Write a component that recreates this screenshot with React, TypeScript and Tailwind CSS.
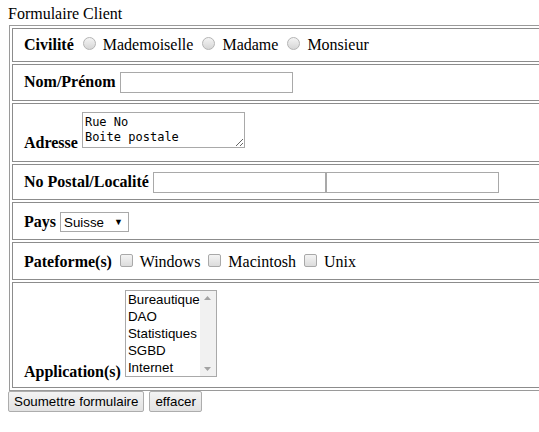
import React from "react";

const Radio = () => (
  <span className="inline-block w-[13px] h-[13px] rounded-full border border-[#b4b4b4] bg-gradient-to-b from-[#f4f4f4] to-[#d6d6d6] ml-[5px] mr-[3px] mt-[3px] align-baseline" />
);

const Check = () => (
  <span className="inline-block w-[13px] h-[13px] rounded-[2px] border border-[#a9a9a9] bg-gradient-to-b from-[#f4f4f4] to-[#dcdcdc] ml-[4px] mr-[3px] mt-[3px] align-baseline" />
);

const TextInput = ({ w = 173 }: { w?: number }) => (
  <input
    type="text"
    readOnly
    style={{ width: w }}
    className="inline-block h-[21px] border border-[#a9a9a9] bg-white px-[2px] py-[1px] align-baseline text-[13.33px] font-['Liberation_Sans',Arial,sans-serif] outline-none"
  />
);

const Cell = ({ children, pad }: { children: React.ReactNode; pad: string }) => (
  <tr>
    <td className={`border border-[#8c8c8c] px-[11px] whitespace-nowrap ${pad}`}>{children}</td>
  </tr>
);

export default function App() {
  const apps = ["Bureautique", "DAO", "Statistiques", "SGBD", "Internet"];
  return (
    <div className="overflow-hidden w-full bg-white">
      <div className="p-[8px] font-['Liberation_Serif','Times_New_Roman',serif] text-[16px] text-black leading-[normal]">
        <div className="leading-[12px] mb-[5px]">Formulaire Client</div>
        <table className="border-separate border-spacing-[2px] border border-[#9a9a9a] ml-[1px] w-[640px]">
          <tbody>
            <Cell pad="pt-[5px] pb-[7px]">
              <b>Civilité</b> <Radio /> Mademoiselle <Radio /> Madame <Radio /> Monsieur
            </Cell>
            <Cell pad="pt-[7px] pb-[7px]">
              <b>Nom/Prénom</b> <TextInput />
            </Cell>
            <Cell pad="pt-[8px] pb-[9px]">
              <b>Adresse</b>{" "}
              <span className="inline-block overflow-hidden align-baseline">
                <textarea
                  readOnly
                  defaultValue={"Rue No\nBoite postale"}
                  className="block w-[163px] h-[36px] border border-[#a9a9a9] bg-white px-[2px] py-[2px] text-[12px] leading-[15px] font-['DejaVu_Sans_Mono','Liberation_Mono',monospace] text-black overflow-hidden outline-none"
                  style={{ resize: "both" }}
                />
              </span>
            </Cell>
            <Cell pad="pt-[7px] pb-[6px]">
              <b>No Postal/Localité</b> <TextInput />
              <TextInput />
            </Cell>
            <Cell pad="pt-[9px] pb-[7px]">
              <b>Pays</b>{" "}
              <span className="inline-flex items-center w-[69px] h-[20px] border border-[#a9a9a9] bg-white pl-[3px] align-baseline text-[13.33px] font-['Liberation_Sans',Arial,sans-serif]">
                <span className="flex-1">Suisse</span>
                <span className="text-[9px] mr-[5px]">▼</span>
              </span>
            </Cell>
            <Cell pad="pt-[8px] pb-[8px]">
              <b>Pateforme(s)</b> <Check /> Windows <Check /> Macintosh <Check /> Unix
            </Cell>
            <Cell pad="pt-[7px] pb-[6px]">
              <b>Application(s)</b>{" "}
              <span className="inline-block overflow-hidden align-baseline w-[92px] h-[87px] border border-[#a9a9a9] bg-white">
                <span className="flex h-full">
                  <span className="flex-1 flex flex-col pl-[2px] text-[13.33px] leading-[17px] font-['Liberation_Sans',Arial,sans-serif]">
                    {apps.map((a) => (
                      <span key={a}>{a}</span>
                    ))}
                  </span>
                  <span className="w-[17px] bg-[#f1f1f1] flex flex-col items-center justify-between py-[5px]">
                    <svg width="7" height="4" viewBox="0 0 7 4"><path d="M0 4 L3.5 0 L7 4 Z" fill="#a3a3a3" /></svg>
                    <svg width="7" height="4" viewBox="0 0 7 4"><path d="M0 0 L3.5 4 L7 0 Z" fill="#a3a3a3" /></svg>
                  </span>
                </span>
              </span>
            </Cell>
          </tbody>
        </table>
        <div className="flex gap-[5px] font-['Liberation_Sans',Arial,sans-serif] text-[13.33px]">
          <span className="h-[21px] px-[5px] flex items-center border border-[#adadad] rounded-[2px] bg-gradient-to-b from-[#f3f3f3] to-[#e2e2e2]">
            Soumettre formulaire
          </span>
          <span className="h-[21px] px-[5px] flex items-center border border-[#adadad] rounded-[2px] bg-gradient-to-b from-[#f3f3f3] to-[#e2e2e2]">
            effacer
          </span>
        </div>
      </div>
    </div>
  );
}
